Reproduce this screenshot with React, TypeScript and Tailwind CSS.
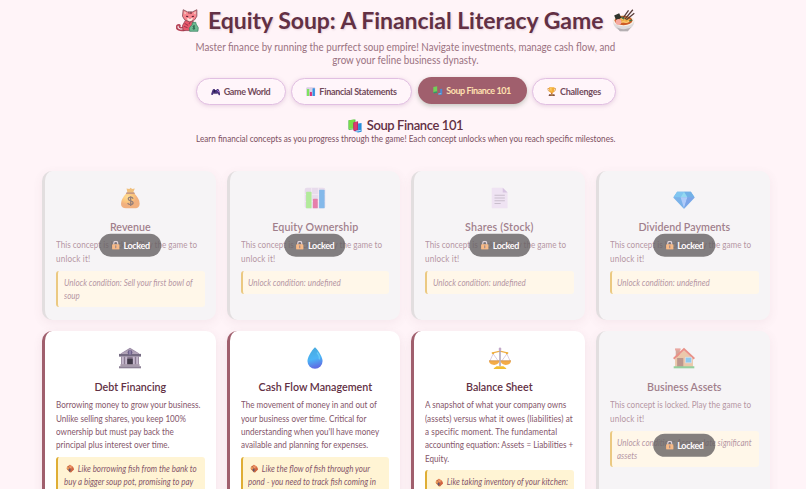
import type { ReactNode } from "react";
import clsx from "clsx";

type IconProps = { className?: string };

function Svg({ className, children }: IconProps & { children: ReactNode }) {
  return (
    <svg viewBox="0 0 32 32" className={clsx("shrink-0", className)} aria-hidden="true">
      {children}
    </svg>
  );
}

function CatIcon({ className }: IconProps) {
  return (
    <Svg className={className}>
      <path d="M13 29C5 31 0 28 1 24c1-3 6-2 4 0-1 2 2 3 6 1" fill="none" stroke="#b8465a" strokeWidth="2.4" />
      <path d="M13 16l-4 7 1 7h12l2-13z" fill="#e8596c" stroke="#8c3a4c" strokeWidth="1" />
      <path d="M10 1l6 3h7l6-3v9l-3 5-7 3-7-3-3-5z" fill="#f9868f" stroke="#87505a" strokeWidth="1.2" />
      <path d="M11.5 3.5l3 2-2.500 2zM27.5 3.5l-3 2 2.500 2z" fill="#f0d3c8" />
      <path d="M17.5 4l.8 3M20 4v3M22 4l-.8 3" stroke="#7c3846" strokeWidth="1.1" />
      <path d="M15 13h9l-2 3-2.500 1-3-1z" fill="#ffe6df" />
      <path d="M14 10l3 .6M25 10l-3 .6" stroke="#5e2536" strokeWidth="1.5" />
      <path d="M18.5 13h2l-1 1.400z" fill="#913149" />
      <path d="M12 20l5 3M11 24l5 2M20 18l-2 3" stroke="#a5384f" strokeWidth="1.5" />
      <path d="M22.5 19l5-.5.5 2.500 3 5-.5 5H19l-.5-4.500 4-5z" fill="#6dba92" stroke="#3b8362" strokeWidth="1" />
      <path d="M26.5 23.8c-3.500-1-3.500 1.500-1.500 2s1 2.500-2 1.500m2-4.500v6" fill="none" stroke="#1f5a42" strokeWidth="1.1" />
    </Svg>
  );
}

function BowlIcon({ className }: IconProps) {
  return (
    <Svg className={className}>
      <path d="M1 16c1 9 5 11 8 13l2 2h11l2-3c5-3 7-6 7-12z" fill="#dedbdc" />
      <path d="M6 25c6 4 14 4 21 0l-5 6H11z" fill="#b5afb2" />
      <ellipse cx="16" cy="16" rx="15" ry="8" fill="#f7f0e7" />
      <ellipse cx="16" cy="16" rx="12.5" ry="6.5" fill="#ce5c25" />
      <path d="M10 16c3-4 15-4 16 0-2 5-13 4-16 0z" fill="#eda847" />
      <path d="M11 14c4-2 7 4 11 1m-9 4c3-4 7 2 11-2" fill="none" stroke="#ffd27a" strokeWidth="1.5" />
      <path d="M3 9l7-3 3 6-7 4z" fill="#30342d" />
      <circle cx="9" cy="18" r="4" fill="#f6aaa0" />
      <circle cx="20" cy="14" r="3" fill="#f3ad40" />
      <path d="M15 13L23 2M18 14L29 1M20 15l11-9" stroke="#573c39" strokeWidth="1.8" />
      <path d="M13 11l4 3m7 3 4-2" stroke="#497346" strokeWidth="2" />
    </Svg>
  );
}

function GamepadIcon({ className }: IconProps) {
  return (
    <Svg className={className}>
      <path d="M8 7h5v3h6V7h5l3 3 4 14c0 5-4 5-6 1l-3-4H10l-4 5c-3 3-6 0-5-4L5 10z" fill="#4b347d" />
      <path d="M8 14h7m-3-4v8" stroke="#221a46" strokeWidth="3" />
      <circle cx="22" cy="12" r="2" fill="#7e77d2" />
      <circle cx="26" cy="15" r="2" fill="#b66adb" />
      <path d="M10 22h12" stroke="#372761" strokeWidth="2" />
    </Svg>
  );
}

function ChartIcon({ className }: IconProps) {
  return (
    <Svg className={className}>
      <rect x="1" y="1" width="30" height="30" rx="3" fill="#d9cce5" />
      <path d="M1 11h30M1 21h30M11 1v30M21 1v30" stroke="#f2eaf5" />
      <rect x="3" y="7" width="8" height="24" rx="1" fill="#7fe45f" />
      <rect x="13" y="17" width="7" height="14" rx="1" fill="#d73378" />
      <rect x="22" y="4" width="8" height="27" rx="1" fill="#3392e1" />
    </Svg>
  );
}

function BooksIcon({ className }: IconProps) {
  return (
    <Svg className={className}>
      <path d="M1 3l16-2v22L3 25c-2 0-2-2-2-4z" fill="#43b74d" />
      <path d="M2 3l13-2v20L2 23z" fill="#7bdc48" />
      <path d="M12 8l11-3v21l-9 2-2-3z" fill="#b72566" />
      <path d="M14 8l7-2v18l-7 2z" fill="#dc3b70" />
      <path d="M23 10l8-1v20l-8 2-6-2v-2l6-1z" fill="#258fdc" />
      <path d="M18 28l11-2" stroke="#ddecff" strokeWidth="2" />
      <path d="M3 23l9-1" stroke="#d6efda" />
    </Svg>
  );
}

function TinyBooksIcon({ className }: IconProps) {
  return (
    <Svg className={className}>
      <path d="M1 3l13-2v20L1 23z" fill="#72cf58" />
      <path d="M1 20l13-2v5L3 25z" fill="#359967" />
      <path d="M24 10l7-1v20l-8 2-6-3 1-4 6-1z" fill="#4b8bd0" />
      <path d="M18 27l10-2" stroke="#acd3ec" strokeWidth="2" />
    </Svg>
  );
}

function TrophyIcon({ className }: IconProps) {
  return (
    <Svg className={className}>
      <path d="M8 5H3c0 7 2 10 8 10M24 5h5c0 7-2 10-8 10" fill="none" stroke="#cf8932" strokeWidth="2.5" />
      <path d="M7 1h18v7c0 7-3 11-7 12v5h-4v-5C9 18 7 14 7 8z" fill="#f4ad37" />
      <path d="M11 3h4v12c-3-2-4-6-4-12z" fill="#ffd575" />
      <path d="M14 19h4v5h-4z" fill="#c46835" />
      <path d="M7 24h18l2 7H5z" fill="#805040" />
      <path d="M12 26h8v2h-8z" fill="#f1bc51" />
    </Svg>
  );
}

function MoneyBagIcon({ className }: IconProps) {
  return (
    <Svg className={className}>
      <defs>
        <radialGradient id="bag" cx=".35" cy=".25">
          <stop stopColor="#ffcf55" />
          <stop offset=".65" stopColor="#f9a52c" />
          <stop offset="1" stopColor="#e8832f" />
        </radialGradient>
      </defs>
      <path d="M12 7L11 2l4 1 2-2 2 2 4-1-2 5 2 3H11z" fill="#e79c2b" />
      <path d="M11 9C5 15 3 20 3 25c0 4 3 6 7 6h13c5 0 7-3 7-7 0-6-4-11-8-15z" fill="url(#bag)" />
      <path d="M11 9h11" stroke="#8a4a3a" strokeWidth="1.8" strokeLinecap="round" />
      <path d="M20.5 17c-1-3-7-3-7 .5 0 3.500 7 2 7 5.500s-6 3.500-8 .5m4.500-10v14" fill="none" stroke="#513427" strokeWidth="1.9" />
    </Svg>
  );
}

function PageIcon({ className }: IconProps) {
  return (
    <Svg className={className}>
      <path d="M5 1h15l7 7v22q0 1-1 1H5q-1 0-1-1V2q0-1 1-1z" fill="#e5d8f0" />
      <path d="M20 1v7h7z" fill="#bfa7d4" />
      <path d="M8 12h15M8 16h15M8 20h15M8 24h9" stroke="#a69bb1" strokeWidth="1.5" />
    </Svg>
  );
}

function DiamondIcon({ className }: IconProps) {
  return (
    <Svg className={className}>
      <path d="M6 7h20l5 7q1 1 0 2L17 31q-1 1-2 0L1 16q-1-1 0-2z" fill="#2487e0" />
      <path d="M6 7h10l-5 8H1z" fill="#2fa8ec" />
      <path d="M16 7h10l5 8H21z" fill="#1685dd" />
      <path d="M16 7l5 8H11z" fill="#4cc8ec" />
      <path d="M11 15h10l-5 16z" fill="#7db0fa" />
      <path d="M21 15h10L16 31z" fill="#2870df" />
    </Svg>
  );
}

function BankIcon({ className }: IconProps) {
  return (
    <Svg className={className}>
      <path d="M3 9L16 1l13 8v4H3z" fill="#9a8aa6" />
      <path d="M0 10h32v4H0z" fill="#756b82" />
      <path d="M2 10L16 3l14 7z" fill="#b1a3b7" />
      <circle cx="16" cy="8" r="3.5" fill="#6d6089" />
      <path d="M16 5v6" stroke="#d2c4e4" />
      <path d="M3 14h26v12H3z" fill="#8a7a91" />
      <path d="M4 14h3v12H4zm5 0h3v12H9zm11 0h3v12h-3zm5 0h3v12h-3z" fill="#c6b9cd" />
      <path d="M12 17h8v10h-8z" fill="#403a48" />
      <path d="M2 25h28v3H2z" fill="#a89bac" />
      <path d="M0 28h32v3H0z" fill="#8b7f94" />
    </Svg>
  );
}

function DropIcon({ className }: IconProps) {
  return (
    <Svg className={className}>
      <defs>
        <linearGradient id="drop" x1="0" y1="0" x2=".2" y2="1">
          <stop stopColor="#47a8da" />
          <stop offset=".6" stopColor="#4bb4f6" />
          <stop offset="1" stopColor="#5f70e4" />
        </linearGradient>
      </defs>
      <path d="M16 .5C15 .5 5 13 5 20.5a11 11 0 0022 0C27 13 17 .5 16 .5z" fill="url(#drop)" />
      <path d="M19 8c3 4 4 8 3 10" fill="none" stroke="#73d4f8" strokeWidth="2" opacity=".7" />
    </Svg>
  );
}

function ScalesIcon({ className }: IconProps) {
  return (
    <Svg className={className}>
      <path d="M4 9l12-3 12 3" fill="none" stroke="#eeae48" strokeWidth="2" />
      <path d="M16 1v27" stroke="#aba1b9" strokeWidth="2.2" />
      <path d="M6 10L1 21m5-11l8 11M26 10l-8 11m8-11l5 11" stroke="#c9b6d1" />
      <path d="M0 20h15c0 8-15 8-15 0zM17 20h15c0 8-15 8-15 0z" fill="#f4ac48" />
      <path d="M0 20h15M17 20h15" stroke="#c88949" />
      <path d="M11 28h10l4 3v1H7v-1z" fill="#f3bd32" />
      <circle cx="16" cy="3" r="2" fill="#c2a8ca" />
      <circle cx="6" cy="9" r="1.5" fill="#edae36" />
      <circle cx="26" cy="9" r="1.5" fill="#edae36" />
    </Svg>
  );
}

function HouseIcon({ className }: IconProps) {
  return (
    <Svg className={className}>
      <path d="M4 3h6v12H4z" fill="#ba735d" />
      <path d="M3 2h8v3H3z" fill="#dc7568" />
      <path d="M3 17L16 5l13 12v12H3z" fill="#dfab77" />
      <path d="M1 17L16 3l15 14" fill="none" stroke="#db513f" strokeWidth="3" />
      <path d="M6 16h9v13H6z" fill="#905947" />
      <path d="M18 15h9v8h-9z" fill="#44aee8" stroke="#c9d9e5" />
      <path d="M1 28h30v3H1z" fill="#4fb863" />
    </Svg>
  );
}

function LockIcon({ className }: IconProps) {
  return (
    <Svg className={className}>
      <path d="M9 14V9c0-9 14-9 14 0v5" fill="none" stroke="#cdbec9" strokeWidth="4" />
      <rect x="3" y="12" width="26" height="19" rx="3" fill="#f5953d" />
      <path d="M16 18v7" stroke="#563d47" strokeWidth="4" strokeLinecap="round" />
    </Svg>
  );
}

// knotted treat that opens every cat analogy
function TreatIcon({ className }: IconProps) {
  return (
    <Svg className={className}>
      <path d="M3 10l12-7 13 8 2 8-9 10-6 1L3 19z" fill="#c56a45" />
      <path d="M3 10l11 3-6 9-7-5z" fill="#e89a5c" />
      <path d="M15 3l13 8-10 3-7-6z" fill="#ef8d60" />
      <path d="M9 19l6-3 3 6-5 6z" fill="#5f5570" />
      <path d="M22 17l7-4 1 8-7 4z" fill="#d9603f" />
      <path d="M12 10l9 5" stroke="#f7be95" strokeWidth="2" />
    </Svg>
  );
}

type Line = { text: string; tracking?: string };

type Concept = {
  title: string;
  titleClass?: string;
  icon: (props: IconProps) => ReactNode;
  locked?: boolean;
  body: Line[];
  note: Line[];
};

const LOCKED_BODY: Line[] = [
  { text: "This concept is locked. Play the game to" },
  { text: "unlock it!", tracking: "tracking-[0.2px]" },
];

const CONCEPTS: Concept[] = [
  {
    title: "Revenue",
    icon: MoneyBagIcon,
    locked: true,
    body: LOCKED_BODY,
    note: [{ text: "Unlock condition: Sell your first bowl of" }, { text: "soup" }],
  },
  {
    title: "Equity Ownership",
    titleClass: "tracking-[0.1px]",
    icon: ChartIcon,
    locked: true,
    body: LOCKED_BODY,
    note: [{ text: "Unlock condition: undefined" }],
  },
  {
    title: "Shares (Stock)",
    titleClass: "tracking-[0.2px]",
    icon: PageIcon,
    locked: true,
    body: LOCKED_BODY,
    note: [{ text: "Unlock condition: undefined" }],
  },
  {
    title: "Dividend Payments",
    icon: DiamondIcon,
    locked: true,
    body: LOCKED_BODY,
    note: [{ text: "Unlock condition: undefined" }],
  },
  {
    title: "Debt Financing",
    icon: BankIcon,
    body: [
      { text: "Borrowing money to grow your business." },
      { text: "Unlike selling shares, you keep 100%" },
      { text: "ownership but must pay back the" },
      { text: "principal plus interest over time." },
    ],
    note: [
      { text: "Like borrowing fish from the bank to" },
      { text: "buy a bigger soup pot, promising to pay" },
      { text: "back more fish later!" },
    ],
  },
  {
    title: "Cash Flow Management",
    icon: DropIcon,
    body: [
      { text: "The movement of money in and out of" },
      { text: "your business over time. Critical for" },
      { text: "understanding when you'll have money" },
      { text: "available and planning for expenses." },
    ],
    note: [
      { text: "Like the flow of fish through your" },
      { text: "pond - you need to track fish coming in" },
      { text: "and fish going out!" },
    ],
  },
  {
    title: "Balance Sheet",
    icon: ScalesIcon,
    body: [
      { text: "A snapshot of what your company owns" },
      { text: "(assets) versus what it owes (liabilities) at", tracking: "tracking-[0.1px]" },
      { text: "a specific moment. The fundamental", tracking: "tracking-[0.12px]" },
      { text: "accounting equation: Assets = Liabilities +" },
      { text: "Equity." },
    ],
    note: [
      { text: "Like taking inventory of your kitchen:" },
      { text: "everything you own and owe!" },
    ],
  },
  {
    title: "Business Assets",
    icon: HouseIcon,
    locked: true,
    body: LOCKED_BODY,
    note: [{ text: "Unlock condition: Accumulate significant" }, { text: "assets" }],
  },
];

const TABS = [
  { label: "Game World", icon: GamepadIcon, size: "w-[90px] tracking-[-0.38px]" },
  { label: "Financial Statements", icon: ChartIcon, size: "w-[121px] tracking-[-0.29px]" },
  { label: "Soup Finance 101", icon: TinyBooksIcon, size: "w-[109px] tracking-[-0.43px]", active: true },
  { label: "Challenges", icon: TrophyIcon, size: "w-[84px] tracking-[-0.22px]" },
];

function ConceptCard({ concept }: { concept: Concept }) {
  const { title, titleClass, icon: Icon, locked, body, note } = concept;

  return (
    <article
      className={clsx(
        "relative rounded-[10px] border-l-[3px] pt-[16.5px] pr-[11px] pb-[10px] pl-[11px] shadow-[0_3px_10px_rgba(120,60,80,0.10)]",
        locked ? "border-[#d0d0d0] bg-[#f1f5f5] opacity-60" : "border-[#a05f6d] bg-white"
      )}
    >
      <Icon className="mx-auto h-[22px] w-[22px]" />
      <h3
        className={clsx(
          "mt-[10px] scale-x-[0.93] text-center text-[11.5px] leading-[16px] font-semibold whitespace-nowrap text-[#623044]",
          titleClass
        )}
      >
        {title}
      </h3>
      <div className="mt-[3.4px] w-fit origin-left scale-x-90 text-[9px] leading-[13.3px] whitespace-nowrap text-[#85566a]">
        {body.map((line) => (
          <div key={line.text} className={line.tracking}>
            {line.text}
          </div>
        ))}
      </div>
      <div
        className={clsx(
          "mt-[5.5px] rounded-[3px] border-l-2 border-[#dfae35] py-[5px] pl-[5.5px] text-[9px] leading-[13.3px] whitespace-nowrap text-[#85566a] italic",
          locked ? "bg-[#fffae0]" : "bg-[#fff4d4]"
        )}
      >
        <div className="w-fit origin-left scale-x-[0.888]">
          {note.map((line, i) => (
            <div key={line.text} className={clsx("flex items-center", line.tracking)}>
              {!locked && i === 0 && <TreatIcon className="mr-[3.5px] ml-[2px] h-[9px] w-[10px]" />}
              {line.text}
            </div>
          ))}
        </div>
      </div>
      {locked && (
        <div className="absolute top-1/2 left-1/2 flex h-[22.5px] w-[61.5px] -translate-x-1/2 -translate-y-1/2 items-center justify-center gap-[3.5px] rounded-full bg-black/80 pt-[1px] text-[9px] font-bold tracking-[-0.35px] text-white">
          <LockIcon className="h-[9px] w-[9px]" />
          Locked
        </div>
      )}
    </article>
  );
}

export default function App() {
  return (
    <div className="h-[489px] overflow-hidden bg-[#fff4f8] pr-[36.5px] pl-[42px] font-['Lato',sans-serif] text-[#623044]">
      <header className="flex flex-col items-center">
        <h1 className="flex h-[40px] items-center gap-[9px] text-[23px] font-bold tracking-[-0.04px] whitespace-nowrap [text-shadow:1px_1px_2px_rgba(130,70,100,0.2)]">
          <CatIcon className="h-[23px] w-[23px]" />
          Equity Soup: A Financial Literacy Game
          <BowlIcon className="h-[23px] w-[23px]" />
        </h1>
        <p className="scale-x-[0.915] text-center text-[10.7px] leading-[13.3px] whitespace-nowrap text-[#9a7180]">
          Master finance by running the purrfect soup empire! Navigate investments, manage cash flow, and
          <br />
          grow your feline business dynasty.
        </p>
      </header>

      <nav className="mt-[11.5px] flex justify-center gap-[5.5px]">
        {TABS.map(({ label, icon: Icon, size, active }) => (
          <button
            key={label}
            className={clsx(
              "flex h-[27px] items-center justify-center gap-[3.5px] rounded-full text-[9px] font-bold whitespace-nowrap",
              size,
              active
                ? "-mt-[1.5px] mb-[1.5px] bg-[#a05f6d] pt-[1px] text-[#ffe0b0] shadow-[0_2px_5px_rgba(60,90,60,0.3)]"
                : "border-[1.4px] border-[#e1bfe2] bg-[#fff5fa] text-[#724a5a] shadow-[0_1px_4px_rgba(160,100,160,0.25)]"
            )}
          >
            <Icon className="h-[9.5px] w-[9.5px]" />
            {label}
          </button>
        ))}
      </nav>

      <section>
        <h2 className="mt-[13px] flex h-[16px] items-center justify-center gap-[4.5px] text-[13px] font-semibold tracking-[-0.4px] whitespace-nowrap">
          <BooksIcon className="h-[14px] w-[14px]" />
          Soup Finance 101
        </h2>
        <p className="-mt-[1px] scale-x-[0.905] text-center text-[9px] leading-[11px] whitespace-nowrap text-[#7c4f61]">
          Learn financial concepts as you progress through the game! Each concept unlocks when you reach specific milestones.
        </p>
        <div className="mt-[26.5px] grid grid-cols-4 grid-rows-[149.3px_229px] gap-x-[11px] gap-y-[10.7px]">
          {CONCEPTS.map((concept) => (
            <ConceptCard key={concept.title} concept={concept} />
          ))}
        </div>
      </section>
    </div>
  );
}
